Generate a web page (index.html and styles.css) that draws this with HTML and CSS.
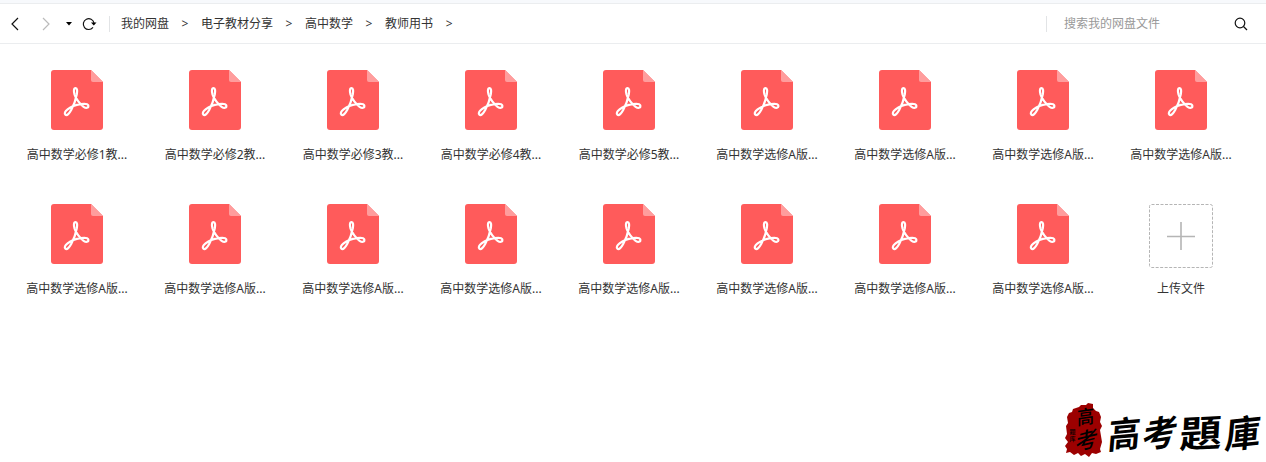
FILE: index.html
```
<!DOCTYPE html>
<html lang="zh-CN">
<head>
<meta charset="utf-8">
<title>我的网盘</title>
<link rel="stylesheet" href="styles.css">
</head>
<body>
<svg class="defs" aria-hidden="true">
  <symbol id="pdf" viewBox="0 0 52 60">
    <path fill="#ff5b5b" d="M3 0H40L52 12V57Q52 60 49 60H3Q0 60 0 57V3Q0 0 3 0Z"/>
    <path fill="#ff9d9d" d="M40 0L52 12H42Q40 12 40 10Z"/>
    <path fill="none" stroke="#fff" stroke-width="2.2" stroke-linejoin="round" d="M24.6 18.2C22.5 18.2 22.7 21.6 23.5 24.5C24.8 28.8 29.3 34.6 32.6 36.8C35.4 38.6 37.6 37.8 37.4 36C37.2 33.6 33.4 33.7 29.5 34.2C25.2 34.8 20 36.7 16.6 39.3C13.8 41.5 13.2 43.6 14.4 44.7C16 46.1 18.3 43.4 20.2 40C22.6 35.6 25 28.5 25.8 24.2C26.4 20.5 26.3 18.2 24.6 18.2Z"/>
  </symbol>
</svg>
<div class="strip"></div>
<header class="toolbar">
  <svg class="nav-icons" viewBox="0 0 109 39">
    <path class="line" d="M18 14L12 20L18 26"/>
    <path class="line muted" d="M43 14L49 20L43 26"/>
    <path d="M66 18H72L69 21.5Z"/>
    <path class="line" d="M93 23.4A5.4 5.4 0 1 1 94 19"/>
    <path d="M91 18.5H96.5L93.8 21.5Z"/>
  </svg>
  <nav class="crumbs">
    <span>我的网盘</span><i>&gt;</i><span>电子教材分享</span><i>&gt;</i><span>高中数学</span><i>&gt;</i><span>教师用书</span><i>&gt;</i>
  </nav>
  <div class="search">
    <span>搜索我的网盘文件</span>
    <svg class="search-icon" viewBox="0 0 14 14"><circle class="line" cx="6" cy="6" r="4.8"/><path class="line" d="M9.5 9.5L13 13"/></svg>
  </div>
</header>
<main class="files">
  <div class="file"><svg class="pdf"><use href="#pdf"/></svg><span>高中数学必修1教...</span></div>
  <div class="file"><svg class="pdf"><use href="#pdf"/></svg><span>高中数学必修2教...</span></div>
  <div class="file"><svg class="pdf"><use href="#pdf"/></svg><span>高中数学必修3教...</span></div>
  <div class="file"><svg class="pdf"><use href="#pdf"/></svg><span>高中数学必修4教...</span></div>
  <div class="file"><svg class="pdf"><use href="#pdf"/></svg><span>高中数学必修5教...</span></div>
  <div class="file"><svg class="pdf"><use href="#pdf"/></svg><span>高中数学选修A版...</span></div>
  <div class="file"><svg class="pdf"><use href="#pdf"/></svg><span>高中数学选修A版...</span></div>
  <div class="file"><svg class="pdf"><use href="#pdf"/></svg><span>高中数学选修A版...</span></div>
  <div class="file"><svg class="pdf"><use href="#pdf"/></svg><span>高中数学选修A版...</span></div>
  <div class="file"><svg class="pdf"><use href="#pdf"/></svg><span>高中数学选修A版...</span></div>
  <div class="file"><svg class="pdf"><use href="#pdf"/></svg><span>高中数学选修A版...</span></div>
  <div class="file"><svg class="pdf"><use href="#pdf"/></svg><span>高中数学选修A版...</span></div>
  <div class="file"><svg class="pdf"><use href="#pdf"/></svg><span>高中数学选修A版...</span></div>
  <div class="file"><svg class="pdf"><use href="#pdf"/></svg><span>高中数学选修A版...</span></div>
  <div class="file"><svg class="pdf"><use href="#pdf"/></svg><span>高中数学选修A版...</span></div>
  <div class="file"><svg class="pdf"><use href="#pdf"/></svg><span>高中数学选修A版...</span></div>
  <div class="file"><svg class="pdf"><use href="#pdf"/></svg><span>高中数学选修A版...</span></div>
  <div class="file"><svg class="upload" viewBox="0 0 64 64"><rect x=".5" y=".5" width="63" height="63" rx="2"/><path d="M32 18V46M18 32.5H46"/></svg><span>上传文件</span></div>
</main>
<svg class="brand" viewBox="0 0 216 67">
  <path fill="#9c0000" d="M26 13L29 12L31 10L36 10L38 8L43 9L43 13L46 16L49 17L51 22L50 27L52 31L50 35L51 41L52 47L50 54L51 57L46 59L42 58L39 62L35 59L31 61L28 58L24 60L20 57L16 58L17 54L15 51L18 47L15 43L17 39L16 31L18 28L17 22L19 18L22 17L23 14Z"/>
  <g class="ink seal">
    <text transform="translate(27 30) skewY(-8) scale(.9 1)" font-size="19">高</text>
    <text transform="translate(25 56) skewY(-14) skewX(-6) scale(1 1)" font-size="22">考</text>
    <text x="19.500" y="39" font-size="6">题</text>
    <text x="19.500" y="46" font-size="6">库</text>
  </g>
  <g class="ink">
    <text transform="translate(57 54) skewY(-5) skewX(-5) scale(.9 1)" font-size="36">高</text>
    <text transform="translate(91 54) skewY(-9) skewX(-8) scale(1 1)" font-size="35">考</text>
    <text transform="translate(129 53) skewY(-3) skewX(-3) scale(1.14 1)" font-size="37">題</text>
    <text transform="translate(174 54) skewY(-6) skewX(-5) scale(.96 1)" font-size="37">庫</text>
  </g>
</svg>
</body>
</html>
```
FILE: styles.css
```
body {
  margin: 0;
  height: 462px;
  overflow: hidden;
  display: flex;
  flex-direction: column;
  background: #fff;
  color: #333;
  font: 12px/18px "Noto Sans", "Noto Sans CJK SC", sans-serif;
}
.defs { position: absolute; width: 0; height: 0; }
.strip { height: 3px; flex: none; background: #f7f9fc; border-bottom: 1px solid #ebedef; }
.toolbar {
  height: 39px;
  flex: none;
  display: flex;
  align-items: center;
  border-bottom: 1px solid #ebedef;
}
.nav-icons { width: 109px; height: 39px; fill: #000; }
.line { fill: none; stroke: #111; stroke-width: 1.2; }
.muted { stroke: #bbb; }
.crumbs {
  display: flex;
  align-items: center;
  height: 16px;
  border-left: 1px solid #e2e4e6;
  padding-left: 11px;
}
.crumbs i { width: 32px; text-align: center; font-style: normal; }
.search {
  margin-left: auto;
  width: 219px;
  height: 16px;
  box-sizing: border-box;
  border-left: 1px solid #e2e4e6;
  margin-right: 1px;
  padding: 0 17px;
  display: flex;
  justify-content: space-between;
  align-items: center;
  color: #999;
}
.search-icon { width: 14px; height: 14px; }
.files {
  display: grid;
  grid-template-columns: repeat(9, 138px);
  grid-auto-rows: 134px;
  padding: 26px 8px 0;
}
.file { display: flex; flex-direction: column; align-items: center; }
.pdf { width: 52px; height: 60px; margin-bottom: 16px; }
.upload { width: 64px; height: 64px; margin-bottom: 12px; fill: none; stroke: #b5b5b5; }
.upload rect { stroke-dasharray: 3 1.5; }
.upload path { stroke-width: 1.6; }
.brand { position: absolute; left: 1050px; top: 395px; width: 216px; height: 67px; overflow: visible; }
.ink {
  fill: #000;
  font-family: "Noto Sans CJK TC", sans-serif;
  font-weight: 700;
}
.seal { font-weight: 500; }
```
